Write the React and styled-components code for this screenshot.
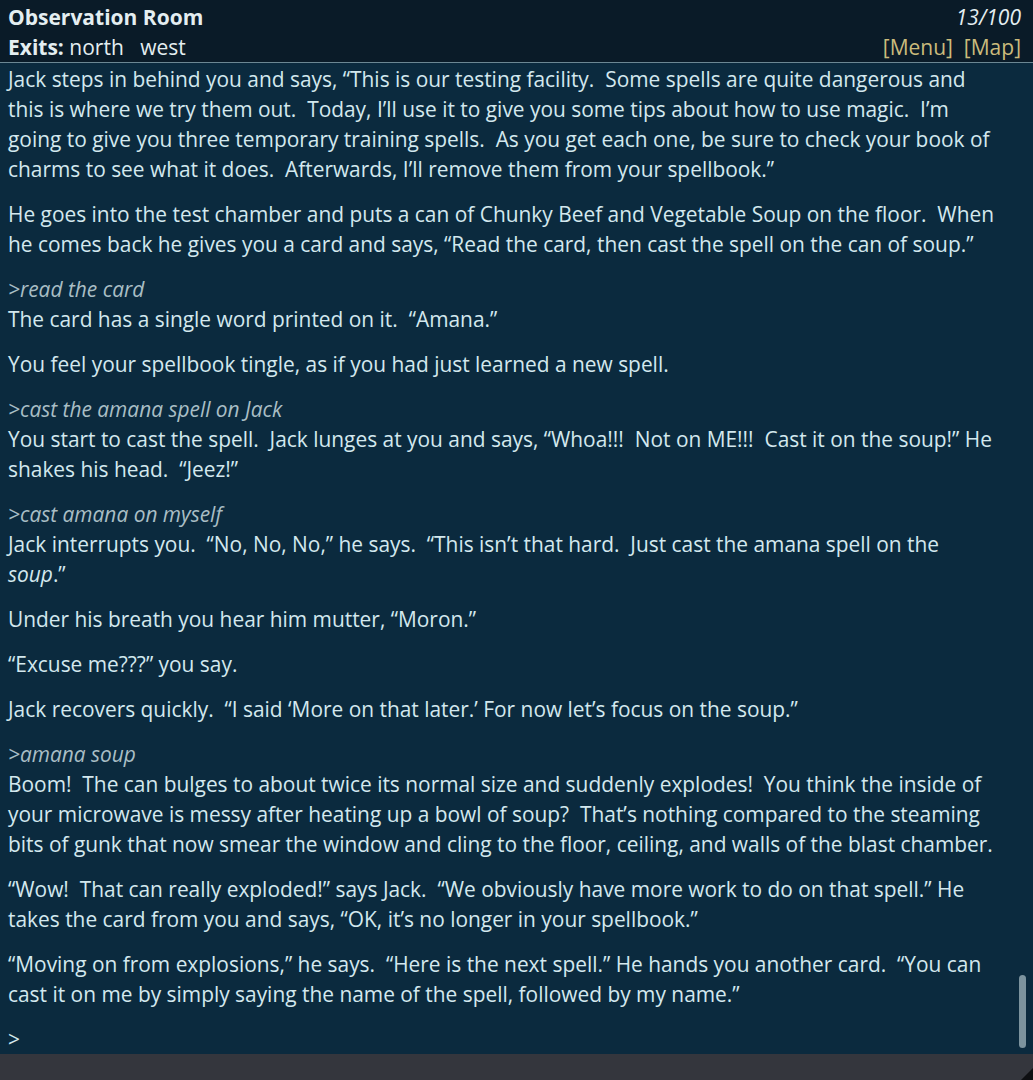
import React from "react";
import styled, { createGlobalStyle } from "styled-components";

const GlobalStyle = createGlobalStyle`
  html, body {
    margin: 0;
    padding: 0;
    height: 100%;
    background: #0b2a3e;
  }
  #root {
    height: 100%;
  }
`;

const Screen = styled.div`
  height: 100vh;
  display: flex;
  flex-direction: column;
  font-family: "Open Sans", "Noto Sans", sans-serif;
  font-size: 21px;
  line-height: 30px;
  color: #d3e8ee;
  background: #0b2a3e;
`;

/* Status bar at the top: room name, score, exits and links */
const StatusBar = styled.div`
  background: #0a1b28;
  border-bottom: 1px solid #6c8793;
  padding: 2px 12px 0 8px;
  height: 60px;
  flex-shrink: 0;
  display: grid;
  grid-template-columns: 1fr auto;
  color: #e4eef1;
`;

const RoomName = styled.div`
  font-weight: 700;
`;

const Score = styled.div`
  font-style: italic;
  text-align: right;
`;

const Exits = styled.div`
  white-space: pre;
  b {
    font-weight: 700;
  }
`;

const Links = styled.div`
  color: #cbbb7c;
  white-space: pre;
  text-align: right;
`;

const Transcript = styled.div`
  flex: 1;
  position: relative;
  overflow: hidden;
  padding: 0 34px 0 8px;
  font-size: 20.9px;
  display: flex;
  flex-direction: column;
  justify-content: flex-end;
`;

const Para = styled.p`
  margin: 0 0 15px;
  white-space: pre-wrap;
`;

const Block = styled.div`
  margin: 0 0 15px;
  white-space: pre-wrap;
`;

const Command = styled.div`
  font-style: italic;
  color: #a9bec5;
`;

const Prompt = styled.div`
  color: #d3e8ee;
`;

const ScrollThumb = styled.div`
  position: absolute;
  right: 7px;
  bottom: 6px;
  width: 7px;
  height: 73px;
  border-radius: 4px;
  background: #7c939e;
`;

const InputBar = styled.div`
  height: 26px;
  background: #34363d;
  position: relative;
  flex-shrink: 0;
`;

const ResizeCorner = styled.div`
  position: absolute;
  right: 0;
  bottom: 0;
  width: 0;
  height: 0;
  border-left: 12px solid transparent;
  border-bottom: 12px solid #0e0f12;
`;

const App = () => {
  return (
    <>
      <GlobalStyle />
      <Screen>
        <StatusBar>
          <RoomName>Observation Room</RoomName>
          <Score>13/100</Score>
          <Exits>
            <b>Exits:</b> north   west
          </Exits>
          <Links>[Menu]  [Map]</Links>
        </StatusBar>

        <Transcript>
          <Para>
            Jack steps in behind you and says, “This is our testing facility.  Some spells are quite dangerous and this is where we try them out.  Today, I’ll use it to give you some tips about how to use magic.  I’m going to give you three temporary training spells.  As you get each one, be sure to check your book of charms to see what it does.  Afterwards, I’ll remove them from your spellbook.”
          </Para>
          <Para>
            He goes into the test chamber and puts a can of Chunky Beef and Vegetable Soup on the floor.  When he comes back he gives you a card and says, “Read the card, then cast the spell on the can of soup.”
          </Para>
          <Block>
            <Command>&gt;read the card</Command>
            The card has a single word printed on it.  “Amana.”
          </Block>
          <Para>You feel your spellbook tingle, as if you had just learned a new spell.</Para>
          <Block>
            <Command>&gt;cast the amana spell on Jack</Command>
            You start to cast the spell.  Jack lunges at you and says, “Whoa!!!  Not on ME!!!  Cast it on the soup!” He shakes his head.  “Jeez!”
          </Block>
          <Block>
            <Command>&gt;cast amana on myself</Command>
            Jack interrupts you.  “No, No, No,” he says.  “This isn’t that hard.  Just cast the amana spell on the <i>soup</i>.”
          </Block>
          <Para>Under his breath you hear him mutter, “Moron.”</Para>
          <Para>“Excuse me???” you say.</Para>
          <Para>Jack recovers quickly.  “I said ‘More on that later.’ For now let’s focus on the soup.”</Para>
          <Block>
            <Command>&gt;amana soup</Command>
            Boom!  The can bulges to about twice its normal size and suddenly explodes!  You think the inside of your microwave is messy after heating up a bowl of soup?  That’s nothing compared to the steaming bits of gunk that now smear the window and cling to the floor, ceiling, and walls of the blast chamber.
          </Block>
          <Para>
            “Wow!  That can really exploded!” says Jack.  “We obviously have more work to do on that spell.” He takes the card from you and says, “OK, it’s no longer in your spellbook.”
          </Para>
          <Para>
            “Moving on from explosions,” he says.  “Here is the next spell.” He hands you another card.  “You can cast it on me by simply saying the name of the spell, followed by my name.”
          </Para>
          <Prompt>&gt;</Prompt>
          <ScrollThumb />
        </Transcript>

        <InputBar>
          <ResizeCorner />
        </InputBar>
      </Screen>
    </>
  );
};

export default App;
